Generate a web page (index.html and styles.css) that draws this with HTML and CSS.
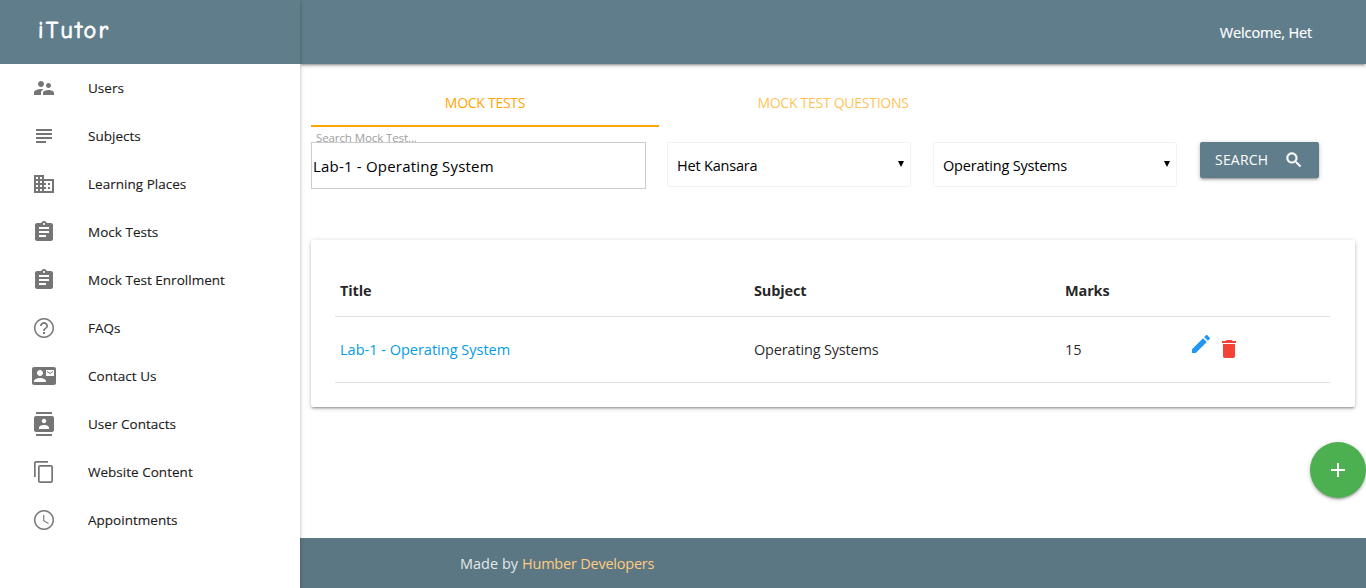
FILE: index.html
```html
<!DOCTYPE html>
<html lang="en">
<head>
<meta charset="utf-8">
<title>iTutor</title>
<link rel="stylesheet" href="styles.css">
</head>
<body>
<div class="app">
  <aside class="sidebar">
    <div class="brand"><span class="brand-name">iTutor</span></div>
    <nav class="menu">
      <a class="item"><svg class="icon" viewBox="0 0 24 24"><path d="M16.5 12c1.380 0 2.490-1.120 2.490-2.500S17.880 7 16.500 7C15.120 7 14 8.120 14 9.500s1.120 2.500 2.500 2.500zM9 11c1.660 0 2.990-1.340 2.990-3S10.660 5 9 5C7.340 5 6 6.340 6 8s1.340 3 3 3zm7.500 3c-1.830 0-5.500.920-5.500 2.750V19h11v-2.250c0-1.830-3.670-2.750-5.500-2.750zM9 13c-2.330 0-7 1.170-7 3.500V19h7v-2.250c0-.850.330-2.340 2.370-3.470C10.500 13.100 9.660 13 9 13z"/></svg><span>Users</span></a>
      <a class="item"><svg class="icon" viewBox="0 0 24 24"><path d="M14 17H4v2h10v-2zm6-8H4v2h16V9zM4 15h16v-2H4v2zM4 5v2h16V5H4z"/></svg><span>Subjects</span></a>
      <a class="item"><svg class="icon" viewBox="0 0 24 24"><path d="M12 7V3H2v18h20V7H12zM6 19H4v-2h2v2zm0-4H4v-2h2v2zm0-4H4V9h2v2zm0-4H4V5h2v2zm4 12H8v-2h2v2zm0-4H8v-2h2v2zm0-4H8V9h2v2zm0-4H8V5h2v2zm10 12h-8v-2h2v-2h-2v-2h2v-2h-2V9h8v10zm-2-8h-2v2h2v-2zm0 4h-2v2h2v-2z"/></svg><span>Learning Places</span></a>
      <a class="item"><svg class="icon" viewBox="0 0 24 24"><path d="M19 3h-4.180C14.400 1.840 13.300 1 12 1c-1.300 0-2.400.840-2.820 2H5c-1.100 0-2 .9-2 2v14c0 1.100.9 2 2 2h14c1.100 0 2-.9 2-2V5c0-1.100-.9-2-2-2zm-7 0c.550 0 1 .450 1 1s-.450 1-1 1-1-.450-1-1 .450-1 1-1zm2 14H7v-2h7v2zm3-4H7v-2h10v2zm0-4H7V7h10v2z"/></svg><span>Mock Tests</span></a>
      <a class="item"><svg class="icon" viewBox="0 0 24 24"><path d="M19 3h-4.180C14.400 1.840 13.300 1 12 1c-1.300 0-2.400.840-2.820 2H5c-1.100 0-2 .9-2 2v14c0 1.100.9 2 2 2h14c1.100 0 2-.9 2-2V5c0-1.100-.9-2-2-2zm-7 0c.550 0 1 .450 1 1s-.450 1-1 1-1-.450-1-1 .450-1 1-1zm2 14H7v-2h7v2zm3-4H7v-2h10v2zm0-4H7V7h10v2z"/></svg><span>Mock Test Enrollment</span></a>
      <a class="item"><svg class="icon" viewBox="0 0 24 24"><path d="M11 18h2v-2h-2v2zm1-16C6.480 2 2 6.480 2 12s4.480 10 10 10 10-4.480 10-10S17.520 2 12 2zm0 18.500c-4.690 0-8.500-3.810-8.500-8.500S7.310 3.500 12 3.500s8.500 3.810 8.500 8.500-3.810 8.500-8.500 8.500zM12 6c-2.210 0-4 1.790-4 4h1.700c0-1.270 1.030-2.300 2.300-2.300s2.300 1.030 2.300 2.300c0 2-3.100 1.750-3.100 5h1.700c0-2.250 3.100-2.500 3.100-5 0-2.210-1.790-4-4-4z"/></svg><span>FAQs</span></a>
      <a class="item"><svg class="icon" viewBox="0 0 24 24"><path d="M21 8V7l-3 2-3-2v1l3 2 3-2zm1-5H2C.9 3 0 3.900 0 5v14c0 1.100.9 2 2 2h20c1.100 0 1.990-.9 1.990-2L24 5c0-1.100-.9-2-2-2zM8 6c1.660 0 3 1.340 3 3s-1.340 3-3 3-3-1.340-3-3 1.340-3 3-3zm6 12H2v-1c0-2 4-3.100 6-3.100s6 1.100 6 3.100v1zm8-6h-8V6h8v6z"/></svg><span>Contact Us</span></a>
      <a class="item"><svg class="icon" viewBox="0 0 24 24"><path d="M20 0H4v2h16V0zM4 24h16v-2H4v2zM20 4H4c-1.100 0-2 .9-2 2v12c0 1.100.9 2 2 2h16c1.100 0 2-.9 2-2V6c0-1.100-.9-2-2-2zm-8 2.750c1.240 0 2.250 1.010 2.250 2.250s-1.010 2.250-2.250 2.250S9.750 10.240 9.750 9 10.760 6.750 12 6.750zM17 17H7v-1.500c0-1.670 3.330-2.500 5-2.500s5 .830 5 2.500V17z"/></svg><span>User Contacts</span></a>
      <a class="item"><svg class="icon" viewBox="0 0 24 24"><path d="M16 1H4c-1.100 0-2 .9-2 2v14h1.700V2.700H16V1zm3 4H8c-1.100 0-2 .9-2 2v14c0 1.100.9 2 2 2h11c1.100 0 2-.9 2-2V7c0-1.100-.9-2-2-2zm.3 16.300H7.700V6.700h11.600v14.600z"/></svg><span>Website Content</span></a>
      <a class="item"><svg class="icon" viewBox="0 0 24 24"><path d="M12 2C6.480 2 2 6.480 2 12s4.480 10 10 10 10-4.480 10-10S17.520 2 12 2zm0 18.500c-4.690 0-8.500-3.810-8.500-8.500S7.310 3.500 12 3.500s8.500 3.810 8.500 8.500-3.810 8.500-8.500 8.500zM12.300 7H11.200v6l5 3 .5-.9-4.400-2.650V7z"/></svg><span>Appointments</span></a>
    </nav>
  </aside>
  <div class="page">
    <header class="topbar"><span class="welcome">Welcome, Het</span></header>
    <main class="content">
      <div class="tabs">
        <a class="tab active"><span>MOCK TESTS</span></a>
        <a class="tab"><span>MOCK TEST QUESTIONS</span></a>
      </div>
      <form class="filters">
        <div class="field">
          <label class="label" for="q">Search Mock Test...</label>
          <input class="input" id="q" type="text" value="Lab-1 - Operating System">
        </div>
        <div class="select"><span>Het Kansara</span><svg class="caret" viewBox="0 0 6 6"><path d="M0 0h6L3 6z"/></svg></div>
        <div class="select"><span>Operating Systems</span><svg class="caret" viewBox="0 0 6 6"><path d="M0 0h6L3 6z"/></svg></div>
        <button class="button" type="button"><span>SEARCH</span><svg class="search-icon" viewBox="0 0 24 24"><path d="M15.500 14h-.790l-.280-.270C15.410 12.590 16 11.110 16 9.500 16 5.910 13.090 3 9.500 3S3 5.910 3 9.500 5.910 16 9.500 16c1.610 0 3.090-.590 4.230-1.570l.270.280v.790l5 4.990L20.490 19l-4.990-5zm-6 0C7.010 14 5 11.990 5 9.500S7.010 5 9.500 5 14 7.010 14 9.500 11.990 14 9.500 14z"/></svg></button>
      </form>
      <section class="card">
        <div class="row head"><span>Title</span><span>Subject</span><span>Marks</span><span></span></div>
        <div class="row">
          <a class="link">Lab-1 - Operating System</a><span class="subject">Operating Systems</span><span>15</span>
          <span class="actions">
            <svg class="edit" viewBox="0 0 24 24"><path d="M3 17.250V21h3.750L17.810 9.940l-3.750-3.750L3 17.250zM20.710 7.040c.390-.390.390-1.020 0-1.410l-2.340-2.340c-.390-.390-1.020-.390-1.410 0l-1.830 1.830 3.750 3.750 1.830-1.830z"/></svg>
            <svg class="delete" viewBox="0 0 24 24"><path d="M6 19c0 1.100.9 2 2 2h8c1.100 0 2-.9 2-2V7H6v12zM19 4h-3.500l-1-1h-5l-1 1H5v2h14V4z"/></svg>
          </span>
        </div>
      </section>
    </main>
    <footer class="footer"><span class="made">Made by</span><a class="dev">Humber Developers</a></footer>
  </div>
</div>
<a class="fab"><svg class="plus" viewBox="0 0 24 24"><path d="M19 13h-6v6h-2v-6H5v-2h6V5h2v6h6v2z"/></svg></a>
</body>
</html>
```
FILE: styles.css
```css
* { box-sizing: border-box; }
body {
  margin: 0;
  background: #fff;
  color: rgba(0, 0, 0, .87);
  font-family: "Open Sans", "Noto Sans", sans-serif;
  font-size: 14.500px;
  line-height: 22px;
  overflow: hidden;
}
svg { display: block; fill: currentColor; flex: none; }
span, a { white-space: nowrap; }
.app { display: flex; height: 588px; }
.sidebar {
  position: relative;
  z-index: 2;
  width: 300px;
  flex: none;
  background: #fff;
  box-shadow: 0 2px 2px 0 rgba(0,0,0,.14), 0 3px 1px -2px rgba(0,0,0,.12), 0 1px 5px 0 rgba(0,0,0,.2);
}
.brand { height: 64px; padding: 14px 38px; background: #607d8b; color: #fff; }
.brand-name {
  display: block;
  font: 500 24px/32px "Comic Neue", Lato, sans-serif;
  letter-spacing: 2.300px;
  -webkit-text-stroke: .8px currentColor;
}
.item {
  display: flex;
  align-items: center;
  gap: 32px;
  height: 48px;
  padding-left: 32px;
  font-size: 13.500px;
  letter-spacing: .020px;
  -webkit-text-stroke: .2px currentColor;
}
.icon { width: 24px; height: 24px; color: #757575; }
.page { flex: 1; display: flex; flex-direction: column; min-width: 0; }
.topbar {
  display: flex;
  justify-content: flex-end;
  height: 64px;
  flex: none;
  padding: 22px 54px 0 0;
  background: #607d8b;
  color: #fff;
  letter-spacing: -.150px;
  -webkit-text-stroke: .2px currentColor;
  box-shadow: 0 2px 2px 0 rgba(0,0,0,.14), 0 3px 1px -2px rgba(0,0,0,.12), 0 1px 5px 0 rgba(0,0,0,.2);
}
.content { flex: 1; padding: 15px 11px 0; }
.tabs { display: flex; height: 48px; font-size: 14px; letter-spacing: -.270px; }
.tab {
  display: flex;
  justify-content: center;
  width: 348px;
  height: 48px;
  padding-top: 13px;
  color: rgba(255, 165, 0, .7);
}
.tab.active { color: orange; border-bottom: 2px solid orange; }
.filters { display: flex; align-items: flex-start; padding-top: 3px; height: 113px; }
.field { width: 335px; margin-right: 21px; }
.label { display: block; height: 12px; padding-left: 5px; font-size: 11.500px; letter-spacing: -.1px; line-height: 16px; color: #9e9e9e; white-space: nowrap; }
.input {
  position: relative;
  display: block;
  width: 335px;
  height: 47px;
  padding: 1px 0 0 1px;
  border: 1px solid #ccc;
  background: #fff;
  color: #000;
  font: 15px/22px "Open Sans", "Noto Sans", sans-serif;
  letter-spacing: .2px;
  outline: none;
}
.select {
  display: flex;
  justify-content: space-between;
  width: 244px;
  height: 45px;
  margin: 12px 22px 0 0;
  padding: 12px 6px 0 9px;
  border: 1px solid #f2f2f2;
  border-radius: 2px;
  color: #000;
  letter-spacing: -.2px;
}
.caret { width: 6px; height: 6px; margin-top: 6px; }
.button {
  display: flex;
  align-items: center;
  justify-content: space-between;
  width: 119px;
  height: 36px;
  margin: 12px 0 0 1px;
  padding: 0 15px;
  border: 0;
  border-radius: 2px;
  background: #607d8b;
  color: #fff;
  font: 14px/36px "Open Sans", "Noto Sans", sans-serif;
  letter-spacing: .2px;
  box-shadow: 0 2px 2px 0 rgba(0,0,0,.14), 0 3px 1px -2px rgba(0,0,0,.12), 0 1px 5px 0 rgba(0,0,0,.2);
}
.search-icon { width: 20px; height: 20px; stroke: currentColor; stroke-width: .5px; }
.card {
  height: 167px;
  padding: 24px 25px 24px 24px;
  border-radius: 2px;
  background: #fff;
  box-shadow: 0 2px 2px 0 rgba(0,0,0,.14), 0 3px 1px -2px rgba(0,0,0,.12), 0 1px 5px 0 rgba(0,0,0,.2);
}
.row {
  display: grid;
  grid-template-columns: 414px 311px 124px 1fr;
  align-items: center;
  height: 66px;
  padding-left: 5px;
  border-bottom: 1px solid #e0e0e0;
}
.row.head { height: 53px; padding-top: 2px; font-weight: 700; letter-spacing: -.150px; }
.link { color: #039be5; }
.subject { letter-spacing: -.170px; }
.actions { display: flex; gap: 4px; padding-bottom: 2px; }
.edit { width: 24px; height: 24px; margin-top: -4px; color: #2196f3; }
.delete { width: 24px; height: 24px; margin-top: 1px; color: #f44336; }
.footer {
  display: flex;
  gap: 4px;
  height: 50px;
  flex: none;
  padding: 15px 0 0 160px;
  background: #5b7783;
  color: rgba(255, 255, 255, .85);
}
.dev { color: #ffcc80; letter-spacing: -.220px; }
.fab {
  position: absolute;
  right: 0;
  bottom: 90px;
  z-index: 3;
  display: flex;
  align-items: center;
  justify-content: center;
  width: 56px;
  height: 56px;
  border-radius: 50%;
  background: #4caf50;
  color: #fff;
  box-shadow: 0 2px 2px 0 rgba(0,0,0,.14), 0 3px 1px -2px rgba(0,0,0,.12), 0 1px 5px 0 rgba(0,0,0,.2);
}
.plus { width: 24px; height: 24px; }
```
